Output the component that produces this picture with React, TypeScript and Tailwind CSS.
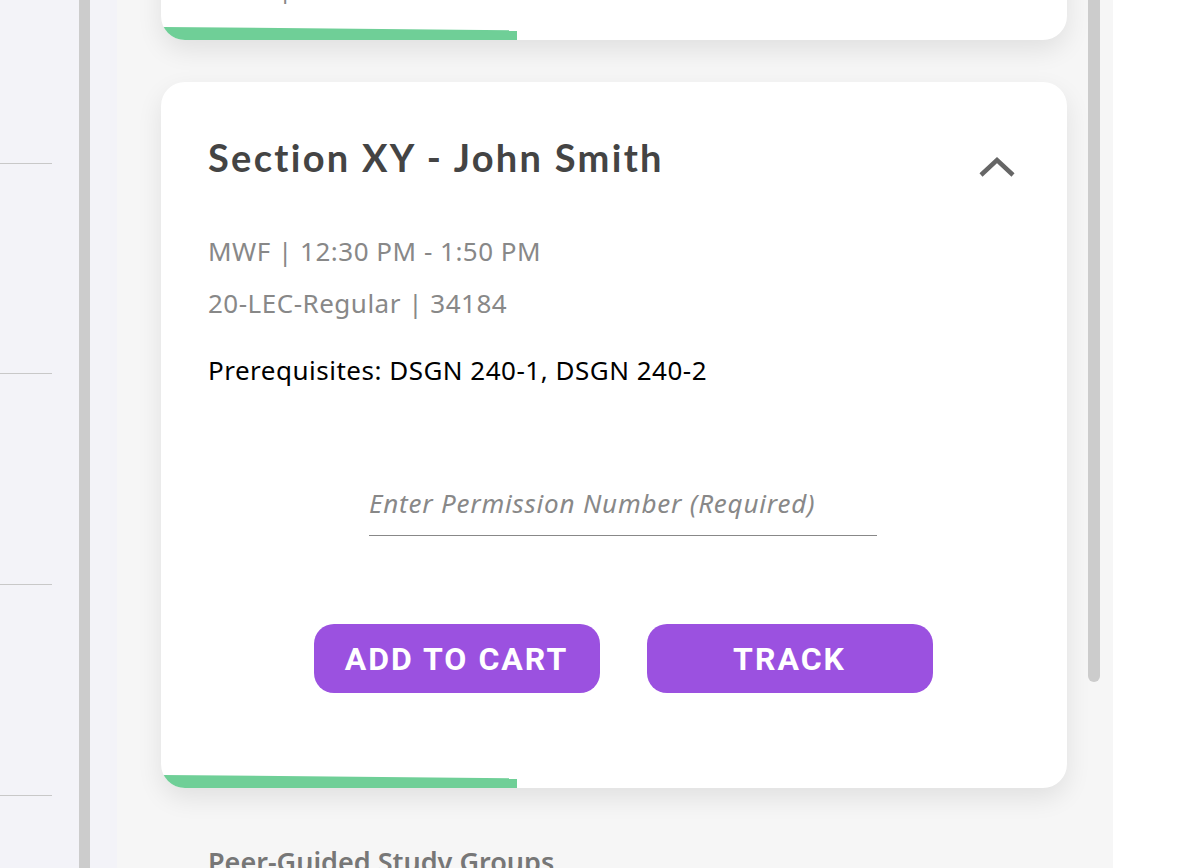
import type { ReactNode } from "react"

const bodyFont = { fontFamily: '"Noto Sans", "Open Sans", sans-serif' }

const Chevron = ({ up }: { up: boolean }) => (
  <svg width="38" height="24" viewBox="0 0 38 24" className={up ? "" : "rotate-180"}>
    <polyline points="3,20 19,5 35,20" fill="none" stroke="#666666" strokeWidth="4.5" />
  </svg>
)

const Card = ({ children, className }: { children: ReactNode; className?: string }) => (
  <div
    className={
      "flex w-[906px] flex-col overflow-hidden rounded-[24px] bg-white shadow-[0_10px_26px_rgba(0,0,0,0.09)] " +
      (className ?? "")
    }
  >
    {children}
    <div className="h-[13px] w-[356px] bg-[#6fcf97] [clip-path:polygon(0_0,100%_25%,100%_100%,0_100%)]" />
  </div>
)

const SectionHeader = ({ up }: { up: boolean }) => (
  <div className="flex items-start justify-between">
    <h2
      className="text-[38px] leading-[40px] font-bold tracking-[2.3px] text-[#444444]"
      style={{ fontFamily: 'Lato, "Open Sans", sans-serif' }}
    >
      Section XY - John Smith
    </h2>
    <div className="mt-[18px] mr-[22px]">
      <Chevron up={up} />
    </div>
  </div>
)

const PurpleButton = ({ label }: { label: string }) => (
  <button
    type="button"
    className="flex h-[69px] w-[286px] items-center justify-center rounded-[20px] bg-[#9b51e0] text-[32px] font-bold tracking-[2px] text-white"
    style={{ fontFamily: 'Roboto, "Liberation Sans", sans-serif' }}
  >
    {label}
  </button>
)

export default function App() {
  return (
    <div className="flex h-[868px] w-[1200px] overflow-hidden bg-white" style={bodyFont}>
      {/* left list pane */}
      <div className="flex w-[79px] flex-col bg-[#f3f3f8]">
        <div className="mt-[163px] h-px w-[52px] bg-[#c8c8c8]" />
        <div className="mt-[209px] h-px w-[52px] bg-[#c8c8c8]" />
        <div className="mt-[210px] h-px w-[52px] bg-[#c8c8c8]" />
        <div className="mt-[210px] h-px w-[52px] bg-[#c8c8c8]" />
      </div>
      <div className="w-[11px] bg-[#cccccc]" />
      <div className="w-[27px] bg-[#f3f3f8]" />

      {/* main scroll area */}
      <div className="relative flex w-[996px] flex-col bg-[#f6f6f6] pl-[44px]">
        <Card className="mt-[-181px] h-[221px] shrink-0">
          <div className="flex-1 pt-[55px] pr-[29px] pl-[47px]">
            <SectionHeader up={false} />
            <p className="mt-[56px] text-[26px] leading-[32px] tracking-[0.5px] text-[#888888]">
              MWF | 12:30 PM - 1:50 PM
            </p>
          </div>
        </Card>

        <Card className="mt-[42px] shrink-0">
          <div className="flex flex-col pt-[55px] pr-[29px] pb-[82px] pl-[47px]">
            <SectionHeader up />
            <p className="mt-[56px] text-[26px] leading-[32px] tracking-[0.5px] text-[#888888]">
              MWF | 12:30 PM - 1:50 PM
            </p>
            <p className="mt-[20px] text-[26px] leading-[32px] tracking-[0.5px] text-[#888888]">
              20-LEC-Regular | 34184
            </p>
            <p className="mt-[35px] text-[26px] leading-[32px] tracking-[0.5px] text-black">
              Prerequisites: DSGN 240-1, DSGN 240-2
            </p>

            <div className="mt-[101px] flex justify-center">
              <input
                type="text"
                placeholder="Enter Permission Number (Required)"
                className="w-[508px] border-b-[1.5px] border-[#888888] bg-transparent pb-[16px] text-[26px] leading-[32px] tracking-[0.8px] italic outline-none placeholder:text-[#888888]"
              />
            </div>

            <div className="mt-[88px] flex justify-center gap-[47px]">
              <PurpleButton label="ADD TO CART" />
              <PurpleButton label="TRACK" />
            </div>
          </div>
        </Card>

        <h3 className="mt-[57px] pl-[47px] text-[27px] leading-[34px] font-semibold text-[#777777]">
          Peer-Guided Study Groups
        </h3>

        {/* scrollbar thumb */}
        <div className="absolute top-0 right-[13px] h-[682px] w-[12px] rounded-b-full bg-[#cccccc]" />
      </div>

      <div className="flex-1 bg-white" />
    </div>
  )
}
